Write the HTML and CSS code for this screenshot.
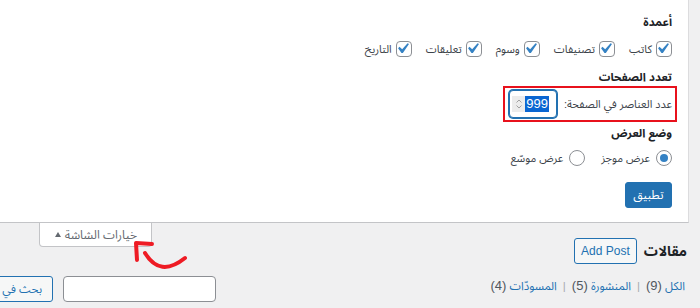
FILE: index.html
```html
<!DOCTYPE html>
<html lang="ar" dir="rtl">
<head>
<meta charset="utf-8">
<title>خيارات الشاشة</title>
<link rel="stylesheet" href="styles.css">
</head>
<body>
<div class="screen-meta">
  <div class="group">
    <div class="legend">أعمدة</div>
    <div class="checks">
      <label class="opt"><span class="cb"><svg viewBox="3.8 2.86 15.24 15.24"><path d="M14.83 4.89l1.34.94-5.81 8.38H9.02L5.78 9.67l1.34-1.25 2.57 2.4z" fill="#3582c4"/></svg></span>كاتب</label>
      <label class="opt"><span class="cb"><svg viewBox="3.8 2.86 15.24 15.24"><path d="M14.83 4.89l1.34.94-5.81 8.38H9.02L5.78 9.67l1.34-1.25 2.57 2.4z" fill="#3582c4"/></svg></span>تصنيفات</label>
      <label class="opt"><span class="cb"><svg viewBox="3.8 2.86 15.24 15.24"><path d="M14.83 4.89l1.34.94-5.81 8.38H9.02L5.78 9.67l1.34-1.25 2.57 2.4z" fill="#3582c4"/></svg></span>وسوم</label>
      <label class="opt"><span class="cb"><svg viewBox="3.8 2.86 15.24 15.24"><path d="M14.83 4.89l1.34.94-5.81 8.38H9.02L5.78 9.67l1.34-1.25 2.57 2.4z" fill="#3582c4"/></svg></span>تعليقات</label>
      <label class="opt"><span class="cb"><svg viewBox="3.8 2.86 15.24 15.24"><path d="M14.83 4.89l1.34.94-5.81 8.38H9.02L5.78 9.67l1.34-1.25 2.57 2.4z" fill="#3582c4"/></svg></span>التاريخ</label>
    </div>
  </div>
  <div class="group">
    <div class="legend legend-2">تعدد الصفحات</div>
    <div class="perpage">
      <span class="pp-label">عدد العناصر في الصفحة:</span>
      <span class="num">
        <span class="spin"><svg viewBox="0 0 10 16"><path d="M2.5 6.5 5 4 7.5 6.5M2.5 9.5 5 12 7.5 9.5" fill="none" stroke="#a0a0a0" stroke-width="1"/></svg></span>
        <span class="num-val">999</span>
      </span>
    </div>
  </div>
  <div class="group">
    <div class="legend legend-3">وضع العرض</div>
    <div class="radios">
      <label class="opt"><span class="rd on"></span>عرض موجز</label>
      <label class="opt"><span class="rd"></span>عرض موسّع</label>
    </div>
  </div>
  <div class="apply-row"><button class="btn-primary">تطبيق</button></div>
</div>
<div class="meta-links">
  <button class="tab"><span>خيارات الشاشة</span><span class="tri"></span></button>
</div>
<div class="wrap">
  <div class="title-row">
    <h1 class="title">مقالات</h1>
    <a class="add-post">Add Post</a>
  </div>
  <div class="list-row">
    <ul class="subsubsub">
      <li><a class="cur">الكل <span class="count">(9)</span></a></li>
      <li class="sep">|</li>
      <li><a>المنشورة <span class="count">(5)</span></a></li>
      <li class="sep">|</li>
      <li><a>المسودّات <span class="count">(4)</span></a></li>
    </ul>
    <div class="search-box">
      <span class="search-input"></span>
      <button class="btn-secondary">بحث في</button>
    </div>
  </div>
</div>
<svg class="annot" width="700" height="308" viewBox="0 0 700 308">
  <path d="M152 244 L136 243 L137 260" fill="none" stroke="#ee1b24" stroke-width="4" stroke-linecap="round" stroke-linejoin="round"/>
  <path d="M145 253 Q160 278 185 258" fill="none" stroke="#ee1b24" stroke-width="4" stroke-linecap="round"/>
</svg>
</body>
</html>
```

FILE: styles.css
```css
* { box-sizing: border-box; }
html, body { margin: 0; padding: 0; }
body {
  background: #f0f0f1;
  font-family: "Liberation Sans", "Noto Sans Arabic", "DejaVu Sans", sans-serif;
  font-size: 11px;
  color: #3c434a;
  direction: rtl;
  width: 700px;
  height: 308px;
  overflow: hidden;
  position: relative;
}
.screen-meta {
  background: #fff;
  border-right: 1px solid #dcdcde;
  border-bottom: 1px solid #c3c4c7;
  margin-right: 11px;
  padding: 13px 16px 14px 0;
}
.legend {
  font-size: 11.5px;
  font-weight: 700;
  color: #1d2327;
  line-height: 18px;
}
.legend-2 { margin-top: 9px; }
.legend-3 { margin-top: 2px; }
.checks, .radios {
  display: flex;
  align-items: center;
  gap: 14px;
  height: 20px;
}
.checks { margin-top: 8px; }
.radios { margin-top: 6px; gap: 16px; }
.opt {
  display: flex;
  align-items: center;
  gap: 4px;
  line-height: 20px;
  color: #3c434a;
}
.radios .opt { gap: 6px; }
.cb {
  width: 16px;
  height: 16px;
  border: 1px solid #8c8f94;
  border-radius: 4px;
  background: #fff;
  display: flex;
  align-items: center;
  justify-content: center;
  overflow: hidden;
}
.cb svg { width: 16px; height: 16px; display: block; flex: none; }
.rd {
  width: 16px;
  height: 16px;
  border: 1px solid #8c8f94;
  border-radius: 50%;
  background: #fff;
  display: flex;
  align-items: center;
  justify-content: center;
}
.rd.on::before {
  content: "";
  width: 8px;
  height: 8px;
  border-radius: 50%;
  background: #3582c4;
}
.perpage {
  display: inline-flex;
  align-items: center;
  gap: 7px;
  border: 2px solid #e8111c;
  padding: 2px 3px 2px 4px;
  margin-right: -5px;
  height: 36px;
}
.pp-label { line-height: 20px; }
.num {
  width: 48px;
  height: 28px;
  border: 1px solid #2271b1;
  box-shadow: 0 0 0 1px #2271b1;
  border-radius: 4px;
  background: #fff;
  display: flex;
  direction: ltr;
  align-items: center;
  padding: 0 7px 0 2px;
  justify-content: space-between;
}
.spin {
  width: 14px;
  height: 16px;
  background: #ececec;
  display: flex;
  align-items: center;
  justify-content: center;
}
.spin svg { width: 10px; height: 16px; display: block; }
.num-val {
  background: #0a66d2;
  color: #fff;
  font-size: 13px;
  line-height: 16px;
  padding: 0 1px;
}
.apply-row { margin-top: 14px; display: flex; }
.btn-primary {
  background: #2271b1;
  border: 1px solid #2271b1;
  color: #fff;
  border-radius: 3px;
  font-family: inherit;
  font-size: 12px;
  height: 26px;
  width: 47px;
  padding: 0;
  line-height: 22px;
}
.meta-links {
  display: flex;
  justify-content: flex-end;
  padding-left: 39px;
}
.tab {
  background: #fff;
  border: 1px solid #c3c4c7;
  border-top: none;
  border-radius: 0 0 4px 4px;
  height: 24px;
  width: 113px;
  padding: 0 14px 0 15px;
  font-family: inherit;
  font-size: 12px;
  color: #646970;
  display: flex;
  align-items: center;
  justify-content: space-between;
  line-height: 20px;
}
.tri {
  width: 0;
  height: 0;
  border-left: 3px solid transparent;
  border-right: 3px solid transparent;
  border-bottom: 5px solid #646970;
}
.wrap {
  padding-right: 13px;
  margin-top: -9px;
}
.title-row {
  display: flex;
  align-items: center;
  gap: 7px;
  height: 26px;
}
.title {
  margin: 0;
  font-size: 14px;
  font-weight: 700;
  color: #1d2327;
  line-height: 26px;
}
.add-post {
  border: 1px solid #2271b1;
  border-radius: 3px;
  background: #f6f7f7;
  color: #2271b1;
  font-size: 12px;
  height: 26px;
  line-height: 24px;
  padding: 0 6px;
  direction: ltr;
}
.list-row {
  margin-top: 12px;
  display: flex;
  justify-content: space-between;
  align-items: flex-start;
  padding-right: 2px;
}
.subsubsub {
  list-style: none;
  margin: 0;
  padding: 0;
  display: flex;
  gap: 6px;
  line-height: 20px;
  color: #646970;
  font-size: 11.5px;
}
.subsubsub a { color: #2271b1; }
.subsubsub .count { color: #50575e; font-size: 13px; }
.sep { color: #a7aaad; }
.search-box {
  display: flex;
  align-items: center;
  gap: 10px;
  margin-left: -57px;
}
.search-input {
  width: 153px;
  height: 26px;
  border: 1px solid #8c8f94;
  border-radius: 4px;
  background: #fff;
}
.btn-secondary {
  border: 1px solid #2271b1;
  border-radius: 3px;
  background: #f6f7f7;
  color: #2271b1;
  font-family: inherit;
  font-size: 11.5px;
  height: 26px;
  width: 110px;
  padding: 0 10px 0 0;
  text-align: right;
  line-height: 22px;
  white-space: nowrap;
}
.annot {
  position: absolute;
  left: 0;
  top: 0;
  pointer-events: none;
}
```
